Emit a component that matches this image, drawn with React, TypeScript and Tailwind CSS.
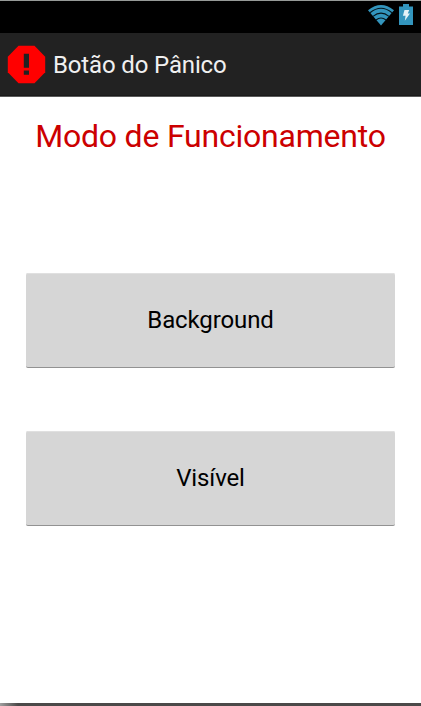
import React from "react";

function StatusBar() {
  return (
    <div className="flex h-[33px] shrink-0 items-start justify-end border-t border-[#969a98] bg-black pr-2 pt-[3px]">
      <svg width="26" height="22" viewBox="0 0 26 22" fill="#3395bd">
        <path d="M0 6.2Q13-4.2 26 6.2L13 21.5Z" />
        <g fill="none" stroke="#05151c" strokeWidth="1.1">
          <path d="M2 8.8Q13-.2 24 8.8" />
          <path d="M5 12.4Q13 5.8 21 12.4" />
          <path d="M8 16Q13 12 18 16" />
        </g>
      </svg>
      <svg className="ml-[5px]" width="14" height="21" viewBox="0 0 14 21">
        <path d="M4 0h6v2.5h4V21H0V2.5h4Z" fill="#3395bd" />
        <path d="M5.5 6h4.7L8.8 9.5h2.2L5.8 16.8l.8-5H3.9Z" fill="#e4f2f7" />
      </svg>
    </div>
  );
}

function Header() {
  return (
    <header className="flex h-16 shrink-0 items-center border-b border-[#5a5a5a] bg-[#222222] pl-[7px] shadow-[inset_0_-1px_0_#1a1a1a]">
      <svg width="39" height="39" viewBox="0 0 39 39">
        <path d="M11.5 .8h16L38.2 11.8v15.5L27.5 38.2h-16L.8 27.3V11.8Z" fill="#ff0000" />
        <path d="M16.8 8.7h5.2v14h-5.2ZM16.8 25.5h5.2v4.3h-5.2Z" fill="#222222" />
      </svg>
      <h1 className="ml-[7px] whitespace-nowrap text-[24px] leading-[28px] tracking-[-0.15px] text-[#f0f0f0]">Botão do Pânico</h1>
    </header>
  );
}

function ModeButton({ label }: { label: string }) {
  return (
    <button className="flex h-[95px] w-[369px] items-center justify-center rounded-[2px] border-b border-[#929292] bg-[#d6d6d6] text-[24px] leading-[28px] tracking-[-0.12px] text-black shadow-[inset_0_1px_0_#e0e0e0]">
      {label}
    </button>
  );
}

export default function App() {
  return (
    <div className="flex h-[706px] w-[421px] flex-col overflow-hidden bg-white font-['Roboto',sans-serif]">
      <StatusBar />
      <Header />
      <main className="flex flex-1 flex-col items-center pt-5">
        <h2 className="whitespace-nowrap text-[32px] leading-[38px] tracking-[-0.22px] text-[#cc0000]">Modo de Funcionamento</h2>
        <div className="mt-[118px] flex flex-col gap-[63px]">
          <ModeButton label="Background" />
          <ModeButton label="Visível" />
        </div>
      </main>
      <div className="h-[3px] shrink-0 bg-linear-to-r from-[#a0a0a0] to-[#4b4949] to-[18px]" />
    </div>
  );
}
